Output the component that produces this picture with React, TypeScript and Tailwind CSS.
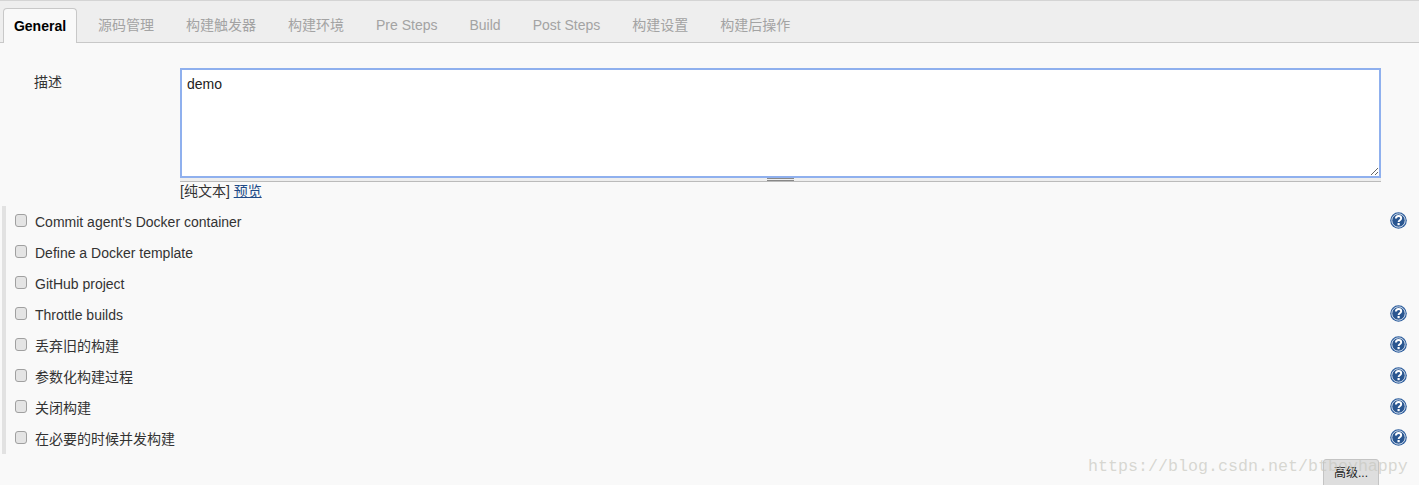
const TABS = ["源码管理", "构建触发器", "构建环境", "Pre Steps", "Build", "Post Steps", "构建设置", "构建后操作"];

const OPTIONS = [
  { label: "Commit agent's Docker container", help: true },
  { label: "Define a Docker template", help: false },
  { label: "GitHub project", help: false },
  { label: "Throttle builds", help: true },
  { label: "丢弃旧的构建", help: true },
  { label: "参数化构建过程", help: true },
  { label: "关闭构建", help: true },
  { label: "在必要的时候并发构建", help: true },
];

function HelpIcon() {
  return (
    <svg width="17" height="17" viewBox="0 0 17 17" className="relative -top-px shrink-0">
      <circle cx="8.5" cy="8.5" r="8.3" fill="#2f5f9e" />
      <circle cx="8.5" cy="8.5" r="6.7" fill="#2a5690" stroke="#d5e0ee" strokeWidth="1" />
      <path d="M5.9 6.6c0-1.7 1.2-2.6 2.7-2.6s2.6.9 2.6 2.2c0 2-2.6 1.9-2.6 3.7" fill="none" stroke="#fff" strokeWidth="1.9" />
      <rect x="7.5" y="11" width="2.2" height="2.2" fill="#fff" />
    </svg>
  );
}

export default function App() {
  return (
    <div className="relative h-[485px] overflow-hidden bg-[#f9f9f9] font-['Liberation_Sans','Noto_Sans_CJK_SC',sans-serif] text-sm text-[#333]">
      {/* Tabs */}
      <div className="flex h-[43px] items-end border-t border-b border-t-[#d4d4d4] border-b-[#c8c8c8] bg-[#eeeeee] pl-[3px]">
        <div className="relative top-px mr-[5px] flex h-[35px] w-[74px] items-center justify-center rounded-t border border-b-0 border-[#c8c8c8] bg-[#f9f9f9] pb-px font-bold text-black">
          General
        </div>
        {TABS.map((tab) => (
          <div key={tab} className="flex h-[35px] items-center px-4 text-[#a3a3a3]">
            {tab}
          </div>
        ))}
      </div>

      {/* Description */}
      <div className="flex pt-[25px] pr-[38px] pl-[34px]">
        <div className="w-[146px] shrink-0 pt-[5px] leading-[18px]">描述</div>
        <div className="flex-1">
          <textarea
            defaultValue="demo"
            className="block h-[110px] w-full resize-y border-2 border-[#8fb0ee] bg-white px-[5px] py-[5px] leading-[18px] text-[#222] outline-none"
          />
          <div className="flex h-[4px] justify-center border-b border-[#bbbbbb] bg-[#eeeeee]">
            <div className="h-[3px] w-[27px] border-y border-[#888888]" />
          </div>
          <div className="leading-[18px]">
            [纯文本] <a className="text-[#204a87] underline">预览</a>
          </div>
        </div>
      </div>

      {/* Options */}
      <div className="mt-[6px] ml-[2px] border-l-4 border-[#e2e2e2] pr-[12px]">
        {OPTIONS.map((option) => (
          <div key={option.label} className="flex h-[31px] items-center pl-[9px]">
            <span className="relative -top-px mr-[8px] h-[13px] w-[12px] rounded-[3px] border border-[#a0a0a0] bg-[#e4e4e4]" />
            <span className="flex-1 text-[#333]">{option.label}</span>
            {option.help && <HelpIcon />}
          </div>
        ))}
      </div>

      {/* Advanced */}
      <div className="mt-[5px] flex justify-end pr-[40px]">
        <button className="h-[30px] w-[56px] rounded-t-[3px] border border-[#c4c4c4] bg-[#dedede] pb-[3px] text-xs text-[#222]">
          高级...
        </button>
      </div>

      {/* Watermark */}
      <div className="absolute top-[455px] left-[1088px] font-['Liberation_Mono',monospace] text-[16.67px] whitespace-nowrap text-[#c8c8c0]/70">
        https://blog.csdn.net/btboyhappy
      </div>
    </div>
  );
}
